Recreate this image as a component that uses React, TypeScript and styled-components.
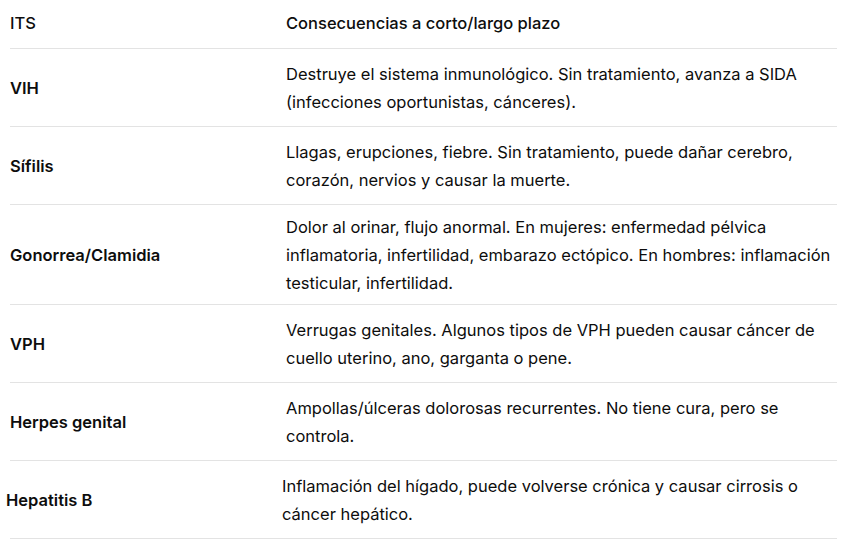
import React from "react";
import styled, { createGlobalStyle } from "styled-components";

const GlobalStyle = createGlobalStyle`
  html, body {
    margin: 0;
    padding: 0;
    background: #ffffff;
  }
  body {
    font-family: Inter, "Noto Sans", "Liberation Sans", sans-serif;
    color: #0d0d0d;
    -webkit-font-smoothing: antialiased;
  }
`;

const COL1_W = "276px";

const Table = styled.div`
  width: 827px;
  margin-left: 10px;
  font-size: 16.5px;
  line-height: 28px;
`;

const HeadRow = styled.div`
  display: grid;
  grid-template-columns: ${COL1_W} 1fr;
  box-sizing: border-box;
  height: 49px;
  padding: 9px 0 12px;
  border-bottom: 1px solid #e3e3e3;
`;

const HeadCell = styled.div`
  font-weight: 500;
`;

const Row = styled.div<{ $nudge?: number }>`
  display: grid;
  grid-template-columns: ${COL1_W} 1fr;
  align-items: center;
  box-sizing: border-box;
  min-height: 78px;
  padding: 8px 0 7px;
  border-bottom: 1px solid #e3e3e3;

  & > div {
    margin-left: ${(p) => (p.$nudge ? `-${p.$nudge}px` : "0")};
  }
`;

const NameCell = styled.div`
  font-weight: 600;
`;

const TextCell = styled.div`
  padding-right: 2px;
`;

type Item = { name: string; text: string; nudge?: number };

const items: Item[] = [
  {
    name: "VIH",
    text: "Destruye el sistema inmunológico. Sin tratamiento, avanza a SIDA (infecciones oportunistas, cánceres).",
  },
  {
    name: "Sífilis",
    text: "Llagas, erupciones, fiebre. Sin tratamiento, puede dañar cerebro, corazón, nervios y causar la muerte.",
  },
  {
    name: "Gonorrea/Clamidia",
    text: "Dolor al orinar, flujo anormal. En mujeres: enfermedad pélvica inflamatoria, infertilidad, embarazo ectópico. En hombres: inflamación testicular, infertilidad.",
  },
  {
    name: "VPH",
    text: "Verrugas genitales. Algunos tipos de VPH pueden causar cáncer de cuello uterino, ano, garganta o pene.",
  },
  {
    name: "Herpes genital",
    text: "Ampollas/úlceras dolorosas recurrentes. No tiene cura, pero se controla.",
  },
  {
    name: "Hepatitis B",
    text: "Inflamación del hígado, puede volverse crónica y causar cirrosis o cáncer hepático.",
    nudge: 4,
  },
];

const App: React.FC = () => {
  return (
    <>
      <GlobalStyle />
      <Table>
        <HeadRow>
          <HeadCell>ITS</HeadCell>
          <HeadCell>Consecuencias a corto/largo plazo</HeadCell>
        </HeadRow>
        {items.map((it) => (
          <Row key={it.name} $nudge={it.nudge}>
            <NameCell>{it.name}</NameCell>
            <TextCell>{it.text}</TextCell>
          </Row>
        ))}
      </Table>
    </>
  );
};

export default App;
